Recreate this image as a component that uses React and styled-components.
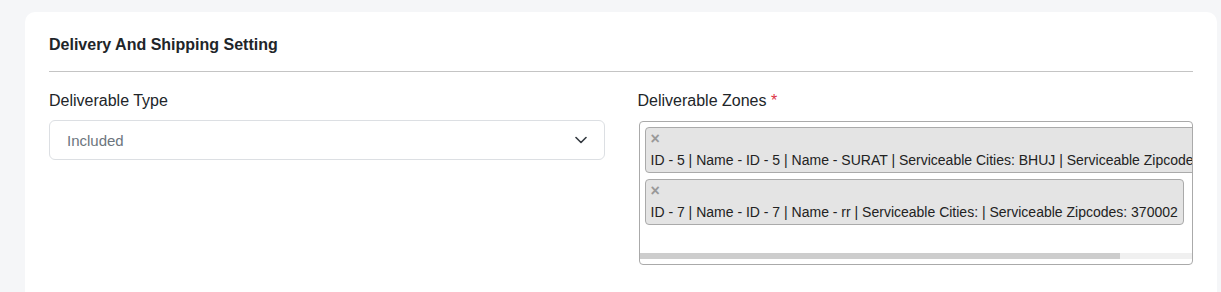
import React from "react";
import styled, { createGlobalStyle } from "styled-components";

const GlobalStyle = createGlobalStyle`
	body {
		margin: 0;
		background: #f5f6f8;
		font-family: "Liberation Sans", Arial, sans-serif;
	}
`;

const zones = [
	"ID - 5 | Name - ID - 5 | Name - SURAT | Serviceable Cities: BHUJ | Serviceable Zipcodes: 370001",
	"ID - 7 | Name - ID - 7 | Name - rr | Serviceable Cities: | Serviceable Zipcodes: 370002",
];

// visible part of the zone list vs its full width
const scrollRatio = 0.87;

const Chevron = () => (
	<svg width="12" height="8" viewBox="0 0 12 8" fill="none">
		<path
			d="M1 1.5l5 5 5-5"
			stroke="#343a40"
			strokeWidth="1.6"
			strokeLinecap="round"
			strokeLinejoin="round"
		/>
	</svg>
);

export default function App() {
	return (
		<>
			<GlobalStyle />
			<Page>
				<Card>
					<Title>Delivery And Shipping Setting</Title>
					<Grid>
						<Field>
							<Label>Deliverable Type</Label>
							<Select>
								<span>Included</span>
								<Chevron />
							</Select>
						</Field>
						<Field>
							<Label>
								Deliverable Zones <Required>*</Required>
							</Label>
							<MultiBox>
								<Scroller>
									<ChipList>
										{zones.map((zone) => (
											<Chip key={zone}>
												<Remove>×</Remove>
												<ChipText>{zone}</ChipText>
											</Chip>
										))}
									</ChipList>
									<SearchLine />
								</Scroller>
								<ScrollTrack>
									<ScrollThumb style={{ width: `${scrollRatio * 100}%` }} />
								</ScrollTrack>
							</MultiBox>
						</Field>
					</Grid>
				</Card>
			</Page>
		</>
	);
}

const Page = styled.div`
	padding: 12px 4px 0 25px;
`;

const Card = styled.div`
	background: #fff;
	border-radius: 10px;
	padding: 21px 24px 40px;
`;

const Title = styled.h3`
	margin: 0;
	font-size: 16px;
	font-weight: 700;
	line-height: 24px;
	color: #212529;
	padding-bottom: 14px;
	border-bottom: 1px solid #c4c4c4;
`;

const Grid = styled.div`
	display: grid;
	grid-template-columns: 1fr 1fr;
	column-gap: 33px;
	margin-top: 17px;
`;

const Field = styled.div`
	display: flex;
	flex-direction: column;
	min-width: 0;
`;

const Label = styled.label`
	font-size: 16px;
	line-height: 24px;
	color: #212529;
	margin-bottom: 7px;
`;

const Required = styled.span`
	color: #dc3545;
`;

const Select = styled.div`
	height: 40px;
	box-sizing: border-box;
	border: 1px solid #dcdfe3;
	border-radius: 6px;
	display: flex;
	align-items: center;
	justify-content: space-between;
	padding: 0 17px 0 17px;
	font-size: 15px;
	color: #6c757d;
`;

const MultiBox = styled.div`
	border: 1px solid #aaa;
	border-radius: 4px;
	padding-bottom: 5px;
	margin: 1px 0 0 1px;
	overflow: hidden;
`;

const Scroller = styled.div`
	overflow: hidden;
`;

const ChipList = styled.div`
	display: flex;
	flex-direction: column;
	align-items: flex-start;
	gap: 6px;
	padding: 5px 5px 0;
`;

const Chip = styled.div`
	background: #e4e4e4;
	border: 1px solid #aaa;
	border-radius: 4px;
	padding: 2px 5px;
	width: max-content;
	font-size: 14px;
	line-height: 20px;
	color: #222;
`;

const Remove = styled.span`
	display: block;
	color: #999;
	font-weight: 700;
	font-size: 16px;
	line-height: 18px;
	margin-bottom: 2px;
`;

const ChipText = styled.span`
	display: block;
	white-space: nowrap;
`;

const SearchLine = styled.div`
	height: 28px;
`;

const ScrollTrack = styled.div`
	height: 6px;
	background: #f0f0f0;
`;

const ScrollThumb = styled.div`
	height: 100%;
	background: #cdcdcd;
`;
